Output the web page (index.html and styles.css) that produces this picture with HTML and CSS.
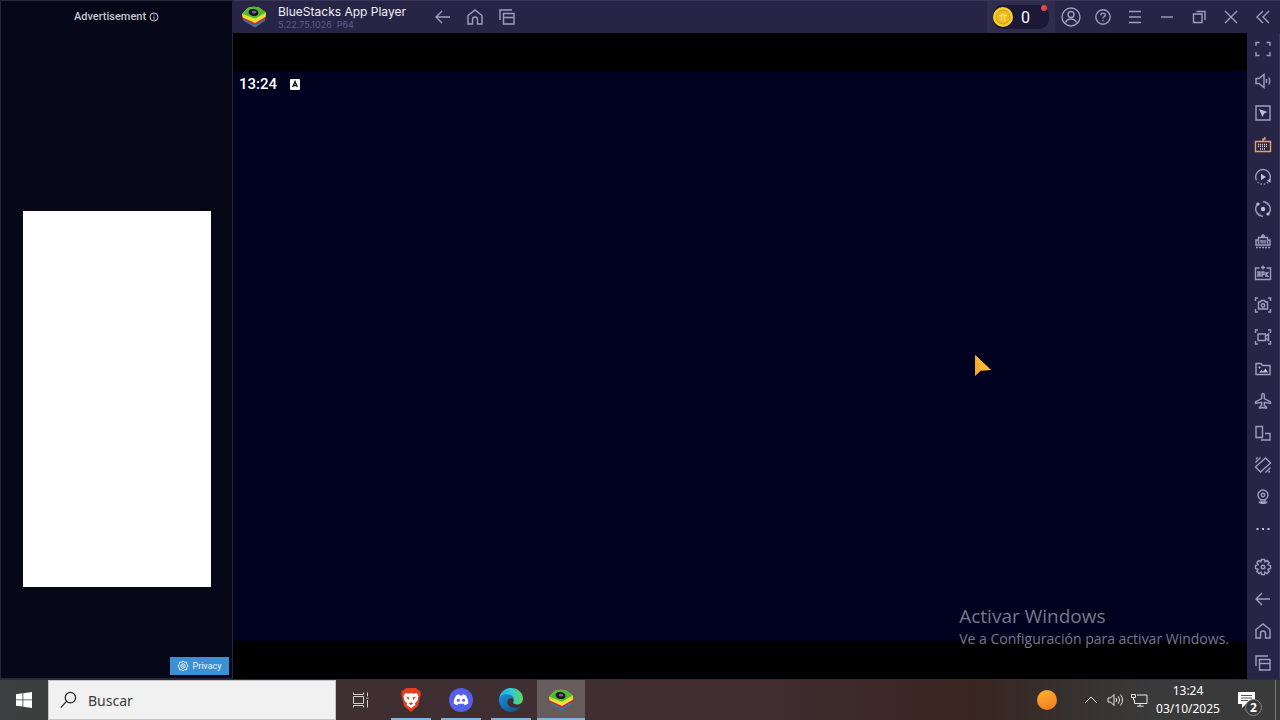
FILE: index.html
```html
<!DOCTYPE html>
<html lang="es">
<head>
  <meta charset="UTF-8">
  <title>BlueStacks App Player</title>
  <link rel="stylesheet" href="styles.css">
</head>
<body>
  <!-- Shared shapes -->
  <svg class="defs" aria-hidden="true">
    <symbol id="back" viewBox="0 0 18 18"><path d="M16 9H2M8 3L2 9l6 6"/></symbol>
    <symbol id="home" viewBox="0 0 18 18"><path d="M2 7.500L9 2l7 5.500V16h-4.500v-4.500a2.500 2.500 0 0 0-5 0V16H2z"/></symbol>
    <symbol id="recents" viewBox="0 0 18 18"><path d="M5.500 5.500h10.500v10.500H5.500zM5.500 9.500H16M2 12V2h12"/></symbol>
    <symbol id="bluestacks" viewBox="0 0 26 24">
      <path d="M2 15.500L14 22.500l10.500-7-1-3.500L14 17 3 12.500z" fill="#2e78a8"/>
      <path d="M1.500 13.500L14 20l10.500-6.500V10L14 15.500 1.500 10z" fill="#d9262c"/>
      <path d="M1.500 10.500v1.800L14 18l10.800-6.200V9L14 14z" fill="#ffdf33"/>
      <path d="M6.500 3Q12 1 18 2.500L25 7.500v2L14 15.500 1 10.500V9z" fill="#c8e838"/>
      <path d="M6.500 3Q12 1 18 2.500L25 7.500 14 13.500 1.500 9z" fill="#57b830"/>
      <ellipse cx="12.500" cy="7.500" rx="5" ry="3.500" fill="#151722" transform="rotate(12 12.500 7.500)"/>
      <ellipse cx="13" cy="7" rx="2.400" ry="1.600" fill="#7a5796"/>
    </symbol>
  </svg>

  <main class="app">
    <aside class="ad">
      <p class="ad-title">Advertisement
        <svg viewBox="0 0 10 10"><circle cx="5" cy="5" r="4"/><path d="M5 4.500V7.500M5 2.500v1"/></svg>
      </p>
      <div class="ad-slot"></div>
      <button class="privacy">
        <svg viewBox="0 0 12 12"><path d="M6 1l1.500 1.300 2-.1.300 2L11 6 9.800 7.800l-.3 2-2-.1L6 11 4.500 9.700l-2 .1-.3-2L1 6l1.200-1.800.3-2 2 .1z"/><circle cx="6" cy="6" r="2.200"/><circle cx="6" cy="6" r=".5"/></svg>
        Privacy
      </button>
    </aside>

    <section class="player">
      <header class="titlebar">
        <svg class="logo"><use href="#bluestacks"/></svg>
        <div class="names">
          <h1>BlueStacks App Player</h1>
          <p>5.22.75.1026&nbsp; P64</p>
        </div>
        <nav class="icons">
          <button aria-label="Back"><svg><use href="#back"/></svg></button>
          <button aria-label="Home"><svg><use href="#home"/></svg></button>
          <button aria-label="Recents"><svg><use href="#recents"/></svg></button>
        </nav>
        <div class="coins">
          <div class="coins-pill">
            <svg viewBox="0 0 20 20"><circle cx="10" cy="10" r="10" fill="#f4cf35"/><circle cx="10" cy="10" r="7" fill="#efb91f" stroke="#d59a18"/><path d="M6 8.500h2.500V14M14 8.500h-2.500V14M8.500 8.500q1.500-3 3 0" fill="none" stroke="#ffe567" stroke-width="1.300"/></svg>
            <span>0</span>
          </div>
          <i class="dot"></i>
        </div>
        <div class="icons">
          <button aria-label="Account"><svg class="big" viewBox="0 0 20 20"><circle cx="10" cy="10" r="9"/><circle cx="10" cy="7.500" r="3"/><path d="M4.500 15.500c1-2.500 3-3.500 5.500-3.500s4.500 1 5.500 3.500"/></svg></button>
          <button aria-label="Help"><svg viewBox="0 0 18 18"><circle cx="9" cy="9" r="7.200"/><path d="M6.800 7.300c0-3 4.400-2.800 4.400-.2 0 1.700-2.200 1.600-2.200 3.400M9 12v1.300"/></svg></button>
          <button aria-label="Menu"><svg viewBox="0 0 18 18"><path d="M3 3.500h12M3 9h12M3 14.500h12"/></svg></button>
          <button aria-label="Minimize"><svg viewBox="0 0 18 18"><path d="M3 9h12"/></svg></button>
          <button aria-label="Restore"><svg viewBox="0 0 18 18"><path d="M3.500 6h8.500v8.500H3.500zM6.500 3.500H15V12"/></svg></button>
          <button aria-label="Close"><svg viewBox="0 0 18 18"><path d="M3 3l12 12M15 3L3 15"/></svg></button>
          <button aria-label="Collapse"><svg viewBox="0 0 18 18"><path d="M9 3L3 9l6 6M15 3L9 9l6 6"/></svg></button>
        </div>
      </header>

      <div class="stage">
        <div class="screen">
          <div class="android">
            <span>13:24</span>
            <svg viewBox="0 0 10 11"><rect width="10" height="11" rx="1" fill="#fff"/><path d="M2.700 8L5 2.500 7.300 8M3.500 6.500h3" fill="none" stroke="#10101c" stroke-width="1.300"/></svg>
          </div>
        </div>

        <nav class="tools">
          <button aria-label="Full screen"><svg viewBox="0 0 18 18"><path d="M2 6V2.500h3.500M12.500 2.500H16V6M16 12v3.500h-3.500M5.500 15.500H2V12"/></svg></button>
          <button aria-label="Volume"><svg viewBox="0 0 18 18"><path d="M2 6.500h3l5-4v13l-5-4H2zM12.500 7v4M15 5.500q1.500 3.500 0 7"/></svg></button>
          <button aria-label="Lock cursor"><svg viewBox="0 0 18 18"><path d="M2 2h14v14H2z"/><path class="solid" d="M5 5l8.500 3-3.500 1.500L8.500 13z"/></svg></button>
          <button class="on" aria-label="Controls"><svg viewBox="0 0 18 18"><path d="M1.500 5.500h15v10h-15zM9 5.500V3h2V1"/><path class="keys" d="M4 8.500h10M4 10.500h10M6 13h6"/></svg></button>
          <button aria-label="Sync"><svg viewBox="0 0 18 18"><path d="M2 11A7.300 7.300 0 1 1 15 13"/><path d="M2 11a7.300 7.300 0 0 0 13 2" stroke-dasharray="1.500 1.800"/><path class="solid" d="M7 5.800l5 3.200-5 3.200zM13 12.500l3.500-1.500v4z"/></svg></button>
          <button aria-label="Macro"><svg viewBox="0 0 18 18"><path d="M9 16.200A7.200 7.200 0 0 1 3.500 4.300M9 1.800a7.200 7.200 0 0 1 5.500 11.900"/><path d="M6.500 15.500l-3-3M11.500 2.500l3 3" stroke-dasharray="1 1"/><circle class="solid" cx="9" cy="9" r="2.200"/><circle class="solid" cx="4" cy="4" r="1.600"/><circle class="solid" cx="14" cy="14" r="1.600"/></svg></button>
          <button aria-label="Multi-instance"><svg viewBox="0 0 18 18"><path d="M4.500 8H2v5h14V8h-2.500M4.500 12V5.500h9V12M9 2v3.500M7 4h4M7 8v3.500M9 8v3.500M11 8v3.500"/><path d="M2 15.500h14" stroke-dasharray="2 1"/></svg></button>
          <button aria-label="Install APK"><svg viewBox="0 0 18 18"><path d="M5.500 4H1.500v11.500h15V4h-4M9 1.500v4M7 3.500h4"/><path d="M4 13V8h2v5M4 10.500h2M8 13V8h2v2.500H8M12 8v5M14.500 8L12 10.500l2.500 2.500"/></svg></button>
          <button aria-label="Screenshot"><svg viewBox="0 0 18 18"><path d="M1.500 5V2H4M14 2h2.500v3M16.500 13v3H14M4 16H1.500v-3M4.500 6h2l1-1.500h3l1 1.500h2v7h-9z"/><circle cx="9" cy="9.500" r="1.700"/></svg></button>
          <button aria-label="Record"><svg viewBox="0 0 18 18"><path d="M1.500 5V2H4M14 2h2.500v3M16.500 13v3H14M4 16H1.500v-3M4 6h7.500v6.500H4zM11.500 8.500L14.500 6v6.500l-3-2.500"/></svg></button>
          <button aria-label="Media"><svg viewBox="0 0 18 18"><path d="M2 14.500V3.500h5l1.500 2H16v9z"/><path class="solid" d="M5 12.500l2.500-2.500L9 11.500l2.500-3L14 12.500z"/><circle class="solid" cx="5.500" cy="7.500" r="1"/></svg></button>
          <button aria-label="Airplane mode"><svg viewBox="0 0 18 18"><path d="M9 1.500c-.9 0-1.300 1-1.300 2v3L1.500 10v1.500l6.200-1.200v3L5.500 15v1.200L9 15.500l3.500.7V15l-2.200-1.700v-3l6.200 1.200V10l-6.200-3.500v-3c0-1-.4-2-1.300-2z"/></svg></button>
          <button aria-label="Rotate"><svg viewBox="0 0 18 18"><path d="M2 2.500h6.500v11H2zM11 9.500h5V16H7"/></svg></button>
          <button aria-label="Shake"><svg viewBox="0 0 18 18"><path d="M11.500 2l5 5L6.500 16l-5-5zM1.500 6.500l5-5M2 3l1.500-1.500M11.500 16.500l5-5M14.500 16.500L16 15"/></svg></button>
          <button aria-label="Location"><svg viewBox="0 0 18 18"><circle cx="9" cy="7" r="5"/><circle cx="9" cy="7" r="1.700"/><path d="M7 11.500V14h4v-2.500M5.500 13.500c-2 2.500 9 2.500 7 0"/></svg></button>
          <button aria-label="More"><svg viewBox="0 0 18 18"><path class="solid" d="M2.500 8h2v2h-2zM8 8h2v2H8zM13.500 8h2v2h-2z"/></svg></button>
          <button class="settings" aria-label="Settings"><svg viewBox="0 0 18 18"><path d="M7.500 1.500h3l.5 2.300 2-1.300 2.200 2.200-1.400 2 2.700.8v3l-2.700.8 1.400 2-2.200 2.200-2-1.300-.5 2.300h-3L7 14.200l-2 1.300-2.200-2.200 1.400-2-2.700-.8v-3l2.700-.8-1.400-2L5 2.500l2 1.300z"/><circle cx="9" cy="9" r="1.800"/></svg></button>
          <button aria-label="Back"><svg><use href="#back"/></svg></button>
          <button aria-label="Home"><svg><use href="#home"/></svg></button>
          <button aria-label="Recents"><svg><use href="#recents"/></svg></button>
        </nav>
      </div>
    </section>
  </main>

  <footer class="taskbar">
    <button class="start" aria-label="Inicio"><svg viewBox="0 0 16 16"><path d="M0 2.200L6.500 1.300V7.500H0zM7.300 1.200L16 0v7.500H7.300zM0 8.300h6.500v6.300L0 13.700zM7.300 8.300H16V16l-8.700-1.200z" fill="#fff"/></svg></button>
    <label class="search">
      <svg viewBox="0 0 18 18"><circle cx="11" cy="6.500" r="5.500"/><path d="M7 10.500L.8 17"/></svg>
      <input type="text" placeholder="Buscar" aria-label="Buscar">
    </label>
    <div class="apps">
      <button aria-label="Vista de tareas"><svg class="view" viewBox="0 0 18 18"><path d="M1.500 1.500v2h10v-2M1.500 5.500h10v7h-10zM1.500 16.500v-2h10v2M15.500 1.500v4M15.500 9v7.500M14.500 7.200h2"/></svg></button>
      <button class="open" aria-label="Brave"><svg viewBox="0 0 24 24"><path d="M7 0h10l2 2 2 .5L22 6l-1 3-2 9-7 6-7-6L3 9 2 6l1-3.500 2-.5z" fill="#e2401f"/><path d="M6.500 5l2.500.7 3-.7 3 .7 2.500-.7 2 3-1 4.500-2.700 3 .7 1.500-4.500 3L7.500 17l.7-1.500-2.700-3L4.500 8z" fill="#fff"/><path d="M7 8.500l3.500 1-1 2.500zM17 8.500l-3.500 1 1 2.500zM9.800 15.200l2.200-1 2.200 1-2.200 2z" fill="#e2401f"/></svg></button>
      <button class="open" aria-label="Discord"><svg viewBox="0 0 24 24"><circle cx="12" cy="12" r="12" fill="#5560e8"/><path d="M7 7.500q1.500-1 3-1.200l.7 1.200h2.600l.7-1.200q1.500.2 3 1.200 2.500 4 2.200 8-1.600 1.300-3.400 1.700l-1-1.500H9.200l-1 1.500q-1.800-.4-3.400-1.700-.3-4 2.200-8z" fill="#fff"/><circle cx="9.400" cy="12.300" r="1.500" fill="#5560e8"/><circle cx="14.600" cy="12.300" r="1.500" fill="#5560e8"/></svg></button>
      <button class="open" aria-label="Edge"><svg viewBox="0 0 24 24">
        <defs>
          <linearGradient id="edgeTop"><stop offset="0" stop-color="#2aa8e0"/><stop offset=".5" stop-color="#2fc6dc"/><stop offset="1" stop-color="#62d94f"/></linearGradient>
          <linearGradient id="edgeLow" x2="1" y2="1"><stop offset="0" stop-color="#1b8fd8"/><stop offset="1" stop-color="#114a8c"/></linearGradient>
        </defs>
        <path d="M0 11C1 4 6 0 12 0c7 0 12 5 12 10.500 0 4-3 6-6 6-3.500 0-4.500-1.500-3.500-3C16 9 10 4.500 0 11z" fill="url(#edgeTop)"/>
        <path d="M0 12c0-7 13-8 15-1-4-2-7 0-6.500 4 .6 4 6 6.500 13 3.500C19 22 16 24 12 24 5 24 0 18.500 0 12z" fill="url(#edgeLow)"/></svg></button>
      <button class="open active" aria-label="BlueStacks"><svg class="bs"><use href="#bluestacks"/></svg></button>
    </div>
    <div class="tray">
      <i class="weather"></i>
      <div class="status">
        <svg viewBox="0 0 18 18"><path d="M3 12l6-6 6 6"/></svg>
        <svg viewBox="0 0 18 18"><path d="M2 7h2.500L8 3.500v11L4.500 11H2zM10 7q1.300 2 0 4M12.300 5.300q2.600 3.700 0 7.400M14.500 3.500q4 5.500 0 11"/></svg>
        <svg viewBox="0 0 18 18"><path d="M7 4h10v8.500H4.500V9M10 12.500V15M7 15.200h6.500M1.500 3.500h4v3h-4zM3.500 6.500V9h1"/></svg>
      </div>
      <time class="clock" datetime="2025-10-03T13:24"><span>13:24</span><span>03/10/2025</span></time>
      <button class="notes" aria-label="Notificaciones">
        <svg viewBox="0 0 18 18"><path d="M0 1h17v12H8l-4 4v-4H0z" fill="#fff"/><path d="M3 4.500h11M3 7h11M3 9.500h7" stroke="#555"/></svg>
        <b>2</b>
      </button>
    </div>
  </footer>

  <div class="watermark">
    <p class="big-line">Activar Windows</p>
    <p>Ve a Configuración para activar Windows.</p>
  </div>
  <svg class="cursor" viewBox="0 0 16 21"><path d="M0 0l16 15-10 .5L0 21z" fill="#f7a92b"/><path d="M0 0l16 15-10 .5z" fill="#fbb832"/></svg>
</body>
</html>
```

FILE: styles.css
```css
* {
  box-sizing: border-box;
}
body {
  margin: 0;
  height: 100vh;
  display: flex;
  flex-direction: column;
  overflow: hidden;
  background: #000;
  font-family: Roboto, sans-serif;
}
h1, p {
  margin: 0;
  font-weight: normal;
}
button {
  padding: 0;
  border: none;
  background: none;
  color: inherit;
  font-family: inherit;
}
svg {
  display: block;
  flex: none;
}
.defs {
  position: absolute;
  width: 0;
  height: 0;
}
.app {
  flex: 1;
  display: flex;
  min-height: 0;
}

/* Ad column */
.ad {
  width: 233px;
  flex: none;
  display: flex;
  flex-direction: column;
  align-items: center;
  background: #060818;
  border: 1px solid #25273b;
}
.ad-title {
  display: flex;
  align-items: center;
  gap: 3px;
  margin-top: 8px;
  font-size: 11px;
  line-height: 16px;
  font-weight: 500;
  color: #c5c6d2;
}
.ad-title svg {
  width: 10px;
  height: 10px;
  fill: none;
  stroke: #c5c6d2;
}
.ad-slot {
  width: 188px;
  height: 376px;
  margin: auto auto 70px;
  background: #fff;
}
.privacy {
  align-self: flex-end;
  display: flex;
  align-items: center;
  justify-content: center;
  gap: 3px;
  width: 59px;
  height: 18px;
  margin: 0 3px 3px 0;
  background: #3b8fd3;
  color: #e8f3fc;
  font-size: 9px;
}
.privacy svg {
  width: 12px;
  height: 12px;
  fill: none;
  stroke: #e8f3fc;
}

/* Player window */
.player {
  flex: 1;
  min-width: 0;
  display: flex;
  flex-direction: column;
}
.titlebar {
  height: 33px;
  display: flex;
  align-items: center;
  padding: 0 1px 0 8px;
  background: #272446;
  border-top: 1px solid #38365a;
}
.logo {
  width: 26px;
  height: 24px;
}
.names {
  width: 149px;
  margin-left: 11px;
  font-family: Inter, sans-serif;
  white-space: nowrap;
}
.names h1 {
  font-size: 12px;
  line-height: 15px;
  color: #f0f0f6;
}
.names p {
  font-size: 9px;
  line-height: 11px;
  color: #605e80;
}
.icons {
  display: flex;
}
.icons button,
.tools button {
  display: flex;
  align-items: center;
  justify-content: center;
  width: 32px;
  height: 32px;
}
.icons svg,
.tools svg {
  width: 18px;
  height: 18px;
  fill: none;
  stroke: #a09ebe;
  stroke-width: 1.4;
}
.icons .big {
  width: 20px;
  height: 20px;
}
.coins {
  position: relative;
  width: 68px;
  height: 32px;
  margin-left: auto;
  padding: 4px 6px;
  background: #2f2c4c;
}
.coins-pill {
  display: flex;
  align-items: center;
  gap: 8px;
  height: 24px;
  border-radius: 10px;
  background: #1b1936;
  color: #fff;
  font-size: 16px;
}
.coins-pill svg {
  width: 20px;
  height: 20px;
}
.dot {
  position: absolute;
  top: 4px;
  right: 8px;
  width: 6px;
  height: 6px;
  border-radius: 50%;
  background: #e0484f;
}
.stage {
  flex: 1;
  display: flex;
  min-height: 0;
}
.screen {
  flex: 1;
  margin: 38px 0;
  background: #010120;
}
.android {
  display: flex;
  align-items: center;
  gap: 13px;
  padding: 4px 6px;
  color: #fff;
  font-size: 15px;
  line-height: 18px;
  font-weight: 500;
}
.android svg {
  width: 10px;
  height: 11px;
}
.tools {
  width: 33px;
  display: flex;
  flex-direction: column;
  background: #272446;
  border-right: 1px solid #38365a;
}
.tools .settings {
  margin-top: auto;
}
.tools .solid {
  fill: #c1bfda;
  stroke: none;
}
.tools .on svg {
  stroke: #e5a64c;
}
.tools .keys {
  stroke: #d8d0d0;
  stroke-dasharray: 1 1;
}

/* Windows taskbar */
.taskbar {
  height: 41px;
  flex: none;
  display: flex;
  border-top: 1px solid #2c2b41;
  background: linear-gradient(90deg, #3d4040 0, #3d3e3e 4%, #3e2f33 27%, #402d31 60%, #38251f 76%, #36302e 83%, #3a3a3a 90%);
  font-family: "Noto Sans", sans-serif;
}
.taskbar button {
  display: flex;
  align-items: center;
  justify-content: center;
}
.start {
  width: 48px;
}
.start svg {
  width: 16px;
  height: 16px;
}
.search {
  width: 288px;
  display: flex;
  align-items: center;
  gap: 11px;
  padding: 0 11px;
  background: #f1f1f1;
  border: 1px solid #c4c4c4;
}
.search svg {
  width: 17px;
  height: 18px;
  fill: none;
  stroke: #222;
  stroke-width: 1.3;
}
.search input {
  flex: 1;
  min-width: 0;
  padding: 0;
  border: none;
  outline: none;
  background: none;
  font-family: inherit;
  font-size: 14px;
}
.search input::placeholder {
  color: #3a3a3a;
}
.apps {
  display: flex;
}
.apps button {
  width: 48px;
  margin: 0 1px;
  position: relative;
}
.apps svg {
  width: 24px;
  height: 24px;
}
.apps .bs {
  width: 26px;
}
.apps .view {
  width: 18px;
  height: 18px;
  fill: none;
  stroke: #d5d0d1;
}
.open::after {
  content: "";
  position: absolute;
  bottom: 0;
  left: 4px;
  right: 4px;
  height: 2px;
  background: #82b4e0;
}
.apps .active {
  background: #665b5d;
}
.active::after {
  left: 0;
  right: 0;
}
.tray {
  margin-left: auto;
  display: flex;
  align-items: center;
  margin-right: 4px;
  border-right: 1px solid #777;
  color: #fff;
}
.weather {
  width: 20px;
  height: 20px;
  margin-right: 25px;
  border-radius: 50%;
  background: linear-gradient(160deg, #fbb034, #f47a1c);
}
.status {
  display: flex;
  gap: 6px;
}
.status svg {
  width: 18px;
  height: 18px;
  fill: none;
  stroke: #e8e8e8;
}
.clock {
  width: 80px;
  display: flex;
  flex-direction: column;
  align-items: center;
  font-size: 12px;
  line-height: 18px;
}
.notes {
  position: relative;
  width: 47px;
  height: 40px;
}
.taskbar .notes {
  justify-content: flex-start;
  padding-left: 10px;
}
.notes svg {
  width: 18px;
  height: 18px;
}
.notes b {
  position: absolute;
  left: 17px;
  top: 19px;
  width: 17px;
  height: 17px;
  border: 1px solid #888;
  border-radius: 50%;
  background: #3a3a3a;
  font-size: 12px;
  line-height: 15px;
  text-align: center;
}

/* Overlays on the desktop */
.watermark {
  position: absolute;
  right: 51px;
  bottom: 71px;
  color: #77788a;
  font-family: "Open Sans", sans-serif;
  font-size: 14px;
  line-height: 20px;
  pointer-events: none;
}
.watermark .big-line {
  font-size: 19px;
  line-height: 26px;
}
.cursor {
  position: absolute;
  left: 975px;
  top: 355px;
  width: 16px;
  height: 21px;
}
```
